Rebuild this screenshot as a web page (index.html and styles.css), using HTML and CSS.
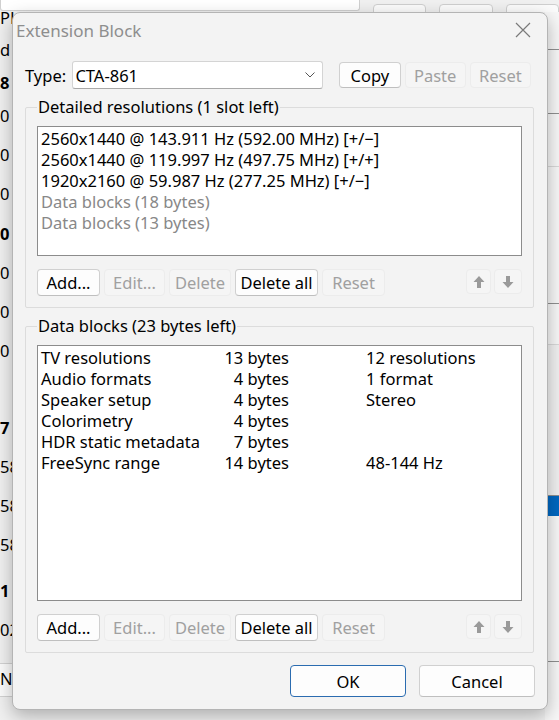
FILE: index.html
```html
<!DOCTYPE html>
<html lang="en">
<head>
    <meta charset="UTF-8">
    <title>Extension Block</title>
    <link rel="stylesheet" href="styles.css">
</head>
<body>
    <!-- main window behind the dialog -->
    <div class="desk">
        <div class="desk-top">
            <div class="desk-field"></div>
            <span class="desk-btn">Edit...</span>
            <span class="desk-btn">Copy</span>
            <span class="desk-btn">Paste</span>
        </div>
        <div class="desk-body">
            <div class="desk-left">
                <div class="dl dl-first">PHL</div>
                <div class="dl dl-short">d r</div>
                <div class="dl dl-short bold">8</div>
                <div class="dl">0</div>
                <div class="dl">0</div>
                <div class="dl dl-short">0</div>
                <div class="dl dl-tall bold">0</div>
                <div class="dl">0</div>
                <div class="dl">0</div>
                <div class="dl">0</div>
                <div class="dl dl-gap bold">7</div>
                <div class="dl">58</div>
                <div class="dl">58</div>
                <div class="dl">58</div>
                <div class="dl dl-tall bold">1</div>
                <div class="dl">02</div>
                <div class="dl dl-btn">N</div>
            </div>
            <div class="desk-right">
                <div class="dr-row dr-a"></div>
                <div class="dr-row dr-b"></div>
                <div class="dr-row dr-c"></div>
                <div class="dr-row dr-d"></div>
                <div class="dr-row dr-e"></div>
                <div class="dr-row dr-f"></div>
                <div class="dr-sel"></div>
                <div class="dr-row dr-g"></div>
            </div>
        </div>
    </div>

    <div class="dialog">
        <div class="titlebar">
            <span class="title">Extension Block</span>
            <svg class="close" width="16" height="16" viewBox="0 0 16 16">
                <path d="M1 1 L15 15 M15 1 L1 15" stroke="#7a7a7a" stroke-width="1.2" fill="none"/>
            </svg>
        </div>

        <div class="type-row">
            <span class="type-label">Type:</span>
            <div class="combo">
                <span>CTA-861</span>
                <svg width="12" height="8" viewBox="0 0 12 8">
                    <path d="M1.5 1.5 L6 6 L10.5 1.5" stroke="#555" stroke-width="1" fill="none"/>
                </svg>
            </div>
            <div class="btn btn-copy">Copy</div>
            <div class="btn disabled">Paste</div>
            <div class="btn disabled">Reset</div>
        </div>

        <fieldset class="group group-res">
            <legend>Detailed resolutions (1 slot left)</legend>
            <div class="listbox list-res">
                <div class="item">2560x1440 @ 143.911 Hz (592.00 MHz) [+/−]</div>
                <div class="item">2560x1440 @ 119.997 Hz (497.75 MHz) [+/+]</div>
                <div class="item">1920x2160 @ 59.987 Hz (277.25 MHz) [+/−]</div>
                <div class="item dim">Data blocks (18 bytes)</div>
                <div class="item dim">Data blocks (13 bytes)</div>
            </div>
            <div class="btn-row">
                <div class="btn w-add">Add...</div>
                <div class="btn disabled w-edit">Edit...</div>
                <div class="btn disabled w-del">Delete</div>
                <div class="btn w-delall">Delete all</div>
                <div class="btn disabled w-reset">Reset</div>
                <div class="spacer"></div>
                <div class="btn disabled arrow">
                    <svg width="12" height="14" viewBox="0 0 12 14"><path d="M6 1 L11.5 7 H8 V13 H4 V7 H0.5 Z" fill="#9a9a9a"/></svg>
                </div>
                <div class="btn disabled arrow">
                    <svg width="12" height="14" viewBox="0 0 12 14"><path d="M6 13 L11.5 7 H8 V1 H4 V7 H0.5 Z" fill="#9a9a9a"/></svg>
                </div>
            </div>
        </fieldset>

        <fieldset class="group group-blocks">
            <legend>Data blocks (23 bytes left)</legend>
            <div class="listbox list-blocks">
                <div class="block-row"><span>TV resolutions</span><span class="bytes">13 bytes</span><span class="info">12 resolutions</span></div>
                <div class="block-row"><span>Audio formats</span><span class="bytes">4 bytes</span><span class="info">1 format</span></div>
                <div class="block-row"><span>Speaker setup</span><span class="bytes">4 bytes</span><span class="info">Stereo</span></div>
                <div class="block-row"><span>Colorimetry</span><span class="bytes">4 bytes</span><span class="info"></span></div>
                <div class="block-row"><span>HDR static metadata</span><span class="bytes">7 bytes</span><span class="info"></span></div>
                <div class="block-row"><span>FreeSync range</span><span class="bytes">14 bytes</span><span class="info">48-144 Hz</span></div>
            </div>
            <div class="btn-row">
                <div class="btn w-add">Add...</div>
                <div class="btn disabled w-edit">Edit...</div>
                <div class="btn disabled w-del">Delete</div>
                <div class="btn w-delall">Delete all</div>
                <div class="btn disabled w-reset">Reset</div>
                <div class="spacer"></div>
                <div class="btn disabled arrow">
                    <svg width="12" height="14" viewBox="0 0 12 14"><path d="M6 1 L11.5 7 H8 V13 H4 V7 H0.5 Z" fill="#9a9a9a"/></svg>
                </div>
                <div class="btn disabled arrow">
                    <svg width="12" height="14" viewBox="0 0 12 14"><path d="M6 13 L11.5 7 H8 V1 H4 V7 H0.5 Z" fill="#9a9a9a"/></svg>
                </div>
            </div>
        </fieldset>

        <div class="footer">
            <div class="btn btn-ok">OK</div>
            <div class="btn btn-cancel">Cancel</div>
        </div>
    </div>
</body>
</html>
```

FILE: styles.css
```css
body {
    margin: 0;
    width: 559px;
    height: 720px;
    overflow: hidden;
    position: relative;
    background: #f0f0f0;
    font-family: "Noto Sans", "Open Sans", sans-serif;
    font-size: 16.5px;
    color: #000;
}

/* ---- main window behind ---- */
.desk {
    height: 720px;
    display: flex;
    flex-direction: column;
}
.desk-top {
    display: flex;
    align-items: flex-start;
    height: 12px;
    overflow: hidden;
}
.desk-field {
    width: 376px;
    height: 10px;
    background: #fff;
    border: 1px solid #d0d0d0;
    border-top: none;
    border-radius: 0 0 3px 3px;
}
.desk-btn {
    margin-left: 13px;
    margin-top: 4px;
    width: 54px;
    height: 20px;
    background: #fbfbfb;
    border: 1px solid #cfcfcf;
    border-radius: 4px;
    font-size: 15px;
    line-height: 26px;
    text-align: center;
}
.desk-body {
    flex: 1;
    display: flex;
    justify-content: space-between;
}
.desk-left {
    width: 14px;
    overflow: hidden;
    white-space: nowrap;
}
.dl {
    height: 39px;
    line-height: 20px;
}
.dl-first { height: 32px; margin-top: -4px; }
.dl-short { height: 33px; }
.dl-tall { height: 46px; padding-top: 7px; box-sizing: border-box; }
.dl-gap { margin-top: 38px; }
.dl-btn {
    margin-top: 4px;
    height: 32px;
    line-height: 30px;
    border-top: 1px solid #d2d2d2;
    border-bottom: 1px solid #d2d2d2;
    background: #fbfbfb;
}
.bold { font-weight: 700; }

.desk-right {
    width: 14px;
    display: flex;
    flex-direction: column;
    background: #f7f7f7;
}
.dr-row { border-bottom: 1px solid #8f8f8f; }
.dr-a { height: 37px; }
.dr-b { height: 63px; }
.dr-c { height: 52px; border-bottom-color: #d8d8d8; }
.dr-d { height: 136px; }
.dr-e { height: 40px; border-bottom-color: #d8d8d8; }
.dr-f { height: 150px; background: #f0f0f0; }
.dr-sel { height: 20px; background: #0067c0; }
.dr-g { height: 145px; }

/* ---- dialog ---- */
.dialog {
    position: absolute;
    left: 12px;
    top: 12px;
    width: 536px;
    height: 698px;
    box-sizing: border-box;
    background: #f3f3f3;
    border: 1px solid #b4b4b4;
    border-radius: 8px;
    box-shadow: 0 6px 18px rgba(0, 0, 0, 0.28);
    display: flex;
    flex-direction: column;
}
.titlebar {
    height: 34px;
    display: flex;
    align-items: center;
    justify-content: space-between;
    padding: 0 16px 0 3px;
}
.title {
    font-size: 17px;
    color: #8e8e8e;
}

.type-row {
    display: flex;
    align-items: center;
    margin-top: 14px;
    padding: 0 12px;
    height: 28px;
}
.type-label { width: 48px; }
.combo {
    width: 254px;
    height: 28px;
    box-sizing: border-box;
    background: #fff;
    border: 1px solid #d4d4d4;
    border-bottom-color: #a8a8a8;
    border-radius: 3px;
    display: flex;
    align-items: center;
    justify-content: space-between;
    padding: 0 6px 0 2px;
}
.btn {
    height: 27px;
    box-sizing: border-box;
    background: #fdfdfd;
    border: 1px solid #d0d0d0;
    border-bottom-color: #bfbfbf;
    border-radius: 4px;
    display: flex;
    align-items: center;
    justify-content: center;
    width: 62px;
    margin-right: 4px;
}
.btn.disabled {
    background: #f5f5f5;
    border-color: #ececec;
    color: #a0a0a0;
}
.btn-copy { margin-left: 16px; height: 26px; }
.type-row .disabled { height: 26px; width: 62px; margin-right: 4px; }

.group {
    margin: 7px 13px 0 12px;
    border: 1px solid #dcdcdc;
    border-radius: 2px;
    padding: 8px 11px 11px 11px;
}
.group legend {
    padding: 0 1px;
    line-height: 22px;
}
.group-blocks { margin-top: 7px; }

.listbox {
    background: #fff;
    border: 1px solid #8c8c8c;
    box-sizing: border-box;
    padding: 1px 3px;
    line-height: 21px;
}
.list-res { height: 130px; }
.list-blocks { height: 256px; }
.dim { color: #888; }

.block-row {
    display: grid;
    grid-template-columns: 175px 73px 1fr;
}
.bytes { text-align: right; }
.info { padding-left: 77px; }

.btn-row {
    display: flex;
    margin-top: 13px;
}
.w-add { width: 63px; }
.w-edit { width: 61px; }
.w-del { width: 62px; }
.w-delall { width: 83px; }
.w-reset { width: 63px; }
.spacer { flex: 1; }
.arrow {
    width: 25px;
    height: 25px;
    margin-right: 3px;
}
.arrow:last-child { margin-right: 0; width: 28px; }

.footer {
    display: flex;
    justify-content: flex-end;
    margin-top: 12px;
    padding-right: 12px;
}
.footer .btn {
    width: 116px;
    height: 32px;
    margin-right: 0;
}
.btn-ok {
    border: 1px solid #2b6cb0;
    margin-right: 13px !important;
}
```
